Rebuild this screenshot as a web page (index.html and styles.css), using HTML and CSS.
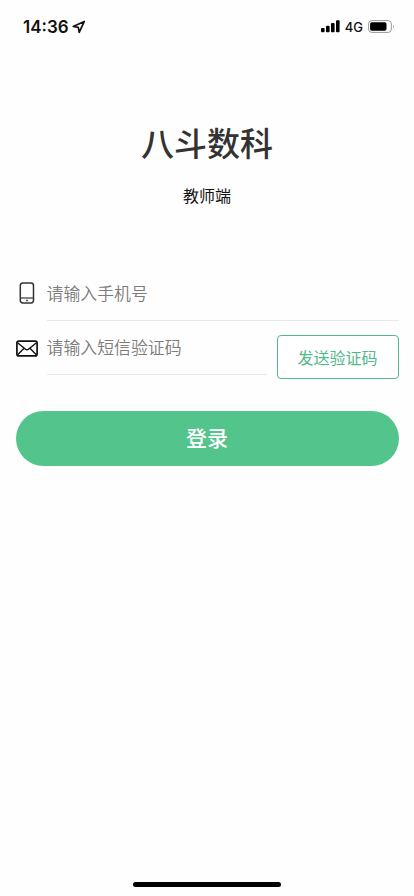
FILE: index.html
```html
<!DOCTYPE html>
<html lang="zh-CN">
<head>
<meta charset="utf-8">
<meta name="viewport" content="width=device-width, initial-scale=1">
<title>八斗数科</title>
<link rel="stylesheet" href="styles.css">
</head>
<body>
<div class="screen">
  <header class="status">
    <div class="status-left">
      <span class="time">14:36</span>
      <svg class="location" width="14" height="14" viewBox="0 0 14 14"><path d="M12.3 1.4 1.2 6.5 6.3 7.3 7.2 12.4Z" fill="none" stroke="#111" stroke-width="1.7" stroke-linejoin="round"/></svg>
    </div>
    <div class="status-right">
      <svg width="19" height="13" viewBox="0 0 19 13" fill="#000"><rect x="0" y="8" width="3.6" height="4.2" rx="1"/><rect x="5" y="5.8" width="3.6" height="6.4" rx="1"/><rect x="10" y="3" width="3.6" height="9.2" rx="1"/><rect x="15" y="0.2" width="3.6" height="12" rx="1"/></svg>
      <span class="network">4G</span>
      <svg width="27" height="13" viewBox="0 0 27 13"><rect x=".6" y=".6" width="22.8" height="11.8" rx="3.4" fill="none" stroke="#999" stroke-width="1"/><rect x="2.1" y="2.2" width="16.4" height="8.6" rx="1.8"/><path d="M25 4.6q1.7 1.9 0 3.8z" fill="#888"/></svg>
    </div>
  </header>
  <main class="content">
    <h1 class="title">八斗数科</h1>
    <p class="subtitle">教师端</p>
    <form class="form">
      <div class="row">
        <span class="icon"><svg width="16" height="22" viewBox="0 0 16 22" fill="none" stroke="#333" stroke-width="1.5"><rect x="1.3" y=".9" width="13.2" height="20" rx="2.6"/><path d="M1.3 16h13.2" stroke-width="1.2"/><circle cx="8" cy="18.5" r=".7" fill="#333" stroke-width=".5"/></svg></span>
        <input class="field" type="tel" placeholder="请输入手机号">
      </div>
      <div class="row">
        <span class="icon icon-mail"><svg width="22" height="17" viewBox="0 0 22 17" fill="none" stroke="#111" stroke-width="1.7" stroke-linejoin="round"><rect x=".9" y="1.1" width="20.2" height="14.8" rx="2"/><path d="M1.5 2.8 9.6 9.2q1.4 1 2.8 0L20.5 2.8M1.7 14.8 7.8 8.4M20.3 14.8 14.2 8.4" stroke-width="1.4"/></svg></span>
        <input class="field" type="text" placeholder="请输入短信验证码">
        <button class="send" type="button">发送验证码</button>
      </div>
      <button class="login" type="button">登录</button>
    </form>
  </main>
  <div class="home-bar"></div>
</div>
</body>
</html>
```
FILE: styles.css
```css
* { box-sizing: border-box; }
body {
  margin: 0;
  background: #fefefe;
  color: #111;
  font-family: "Noto Sans CJK SC", sans-serif;
}
.screen {
  width: 414px;
  height: 896px;
  display: flex;
  flex-direction: column;
  overflow: hidden;
}
.status {
  height: 54px;
  padding: 0 19px 0 23px;
  display: flex;
  justify-content: space-between;
  align-items: center;
  font-family: Inter, sans-serif;
}
.status-left, .status-right { display: flex; align-items: center; }
.status-right { padding-bottom: 1px; }
.time { font-size: 17px; font-weight: 600; line-height: 20px; }
.location { margin-left: 3px; }
.network { margin: 0 5px; font-size: 13px; font-weight: 500; line-height: 16px; }
.content { flex: 1; padding: 64px 15.5px 0; }
.title {
  margin: 0;
  color: #333;
  font-size: 33px;
  font-weight: 500;
  line-height: 48px;
  text-align: center;
}
.subtitle {
  margin: 17px 0 0;
  color: #111;
  font-size: 16px;
  line-height: 24px;
  text-align: center;
}
.form { margin-top: 60px; }
.row { display: flex; height: 54px; align-items: flex-start; }
.icon {
  width: 31px;
  height: 54px;
  display: flex;
  align-items: center;
  padding: 0 9px 3px 0;
  justify-content: center;
}
.icon-mail { padding-bottom: 0; }
.field {
  flex: 1;
  min-width: 0;
  height: 54px;
  padding: 0 0 2px;
  border: 0;
  border-bottom: 1px solid #e9e9e9;
  border-radius: 0;
  outline: 0;
  background: transparent;
  color: #333;
  font: 350 16.9px "Noto Sans CJK SC", sans-serif;
}
.field::placeholder { color: #7c7c7c; opacity: 1; }
.send {
  width: 122px;
  height: 44px;
  margin: 14px 0 0 10px;
  padding: 0;
  border: 1.5px solid #51b98a;
  border-radius: 4px;
  background: #fff;
  color: #51b98a;
  font: 16px "Noto Sans CJK SC", sans-serif;
}
.login {
  display: block;
  width: 100%;
  height: 55px;
  margin-top: 35.5px;
  padding: 0 0 2px;
  border: 0;
  border-radius: 28px;
  background: #53c48b;
  color: #fff;
  font: 500 21px "Noto Sans CJK SC", sans-serif;
}
.home-bar {
  width: 148px;
  height: 5px;
  margin: 0 auto 9px;
  border-radius: 3px;
  background: #000;
}
```
